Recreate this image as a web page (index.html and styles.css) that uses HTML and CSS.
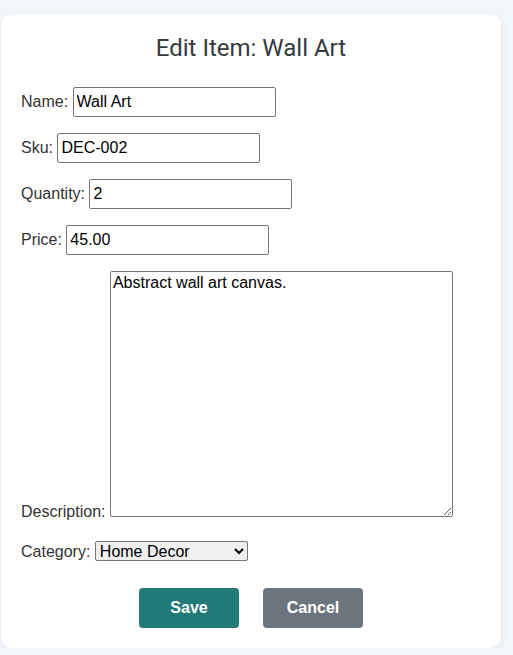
FILE: index.html
```html
<!DOCTYPE html>
<html>
<head>
	<link rel="stylesheet" href="styles.css">
</head>
<body>
	<div class="card">
		<h2>Edit Item: Wall Art</h2>

		<form id="edit_form">
			<div class="form-row">
				<label for="txt_name">Name:</label>
				<input type="text" id="txt_name" value="Wall Art">
			</div>
			<div class="form-row">
				<label for="txt_sku">Sku:</label>
				<input type="text" id="txt_sku" value="DEC-002">
			</div>
			<div class="form-row">
				<label for="txt_qty">Quantity:</label>
				<input type="text" id="txt_qty" value="2">
			</div>
			<div class="form-row">
				<label for="txt_price">Price:</label>
				<input type="text" id="txt_price" value="45.00">
			</div>
			<div class="form-row desc-row">
				<label for="txt_desc">Description:</label>
				<textarea id="txt_desc">Abstract wall art canvas.</textarea>
			</div>
			<div class="form-row">
				<label for="sel_category">Category:</label>
				<select id="sel_category">
					<option>Home Decor</option>
					<option>Furniture</option>
					<option>Lighting</option>
				</select>
			</div>

			<div class="buttons">
				<input type="button" class="btn btn-save" value="Save">
				<input type="button" class="btn btn-cancel" value="Cancel">
			</div>
		</form>
	</div>
</body>
</html>
```

FILE: styles.css
```css
body {
  font-family: "Liberation Sans", Arial, sans-serif;
  background-color: #f3f6fb;
  margin: 0;
  color: #333333;
}

.card {
  width: 500px;
  box-sizing: border-box;
  margin: 14px 0 0 1px;
  padding: 20px;
  background-color: #ffffff;
  border-radius: 10px;
  box-shadow: 0 2px 8px rgba(0, 0, 0, 0.08);
}

h2 {
  font-family: Roboto, sans-serif;
  font-size: 24px;
  font-weight: normal;
  color: #343a40;
  text-align: center;
  margin: 0 0 25px 0;
}

.form-row {
  font-size: 16px;
  margin-bottom: 16px;
}

.desc-row {
  margin-bottom: 20px;
}

.form-row input,
.form-row textarea,
.form-row select {
  font-family: "Liberation Sans", Arial, sans-serif;
  font-size: 16px;
  color: #000000;
}

.form-row input {
  width: 203px;
  height: 30px;
  box-sizing: border-box;
  padding: 0 3px;
  border: 1px solid #767676;
  border-radius: 2px;
}

.form-row textarea {
  width: 343px;
  height: 246px;
  box-sizing: border-box;
  padding: 2px;
  border: 1px solid #767676;
  border-radius: 2px;
  resize: both;
}

.form-row select {
  width: 153px;
  height: 20px;
  border: 1px solid #767676;
  border-radius: 2px;
}

.buttons {
  display: flex;
  justify-content: center;
  gap: 24px;
  margin-top: 27px;
}

.btn {
  width: 100px;
  height: 40px;
  border: none;
  border-radius: 4px;
  color: #ffffff;
  font-family: "Liberation Sans", Arial, sans-serif;
  font-size: 16px;
  font-weight: bold;
}

.btn-save {
  background-color: #1f7a78;
}

.btn-cancel {
  background-color: #6c757d;
}
```
